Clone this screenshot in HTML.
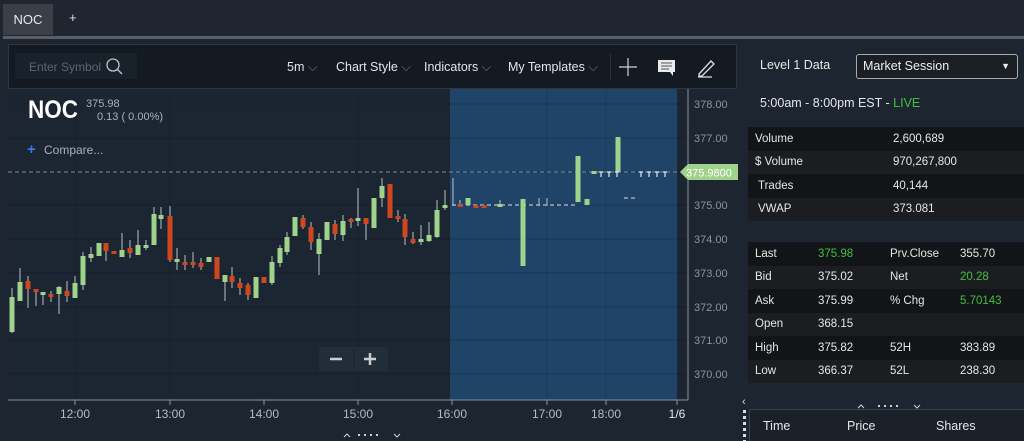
<!DOCTYPE html>
<html><head><meta charset="utf-8"><style>
*{margin:0;padding:0;box-sizing:border-box}
body{width:1024px;height:441px;background:#1d2531;font-family:"Liberation Sans",sans-serif;overflow:hidden;position:relative;color:#d8dde3}
.a{position:absolute}
.tbl{position:absolute;left:748px;width:276px;background:#121417}
.tbl .r{height:23.5px;display:flex;align-items:center;font-size:11.5px;color:#e6e6e6}
.tbl .r:nth-child(even){background:#1b1d21}
.g{color:#3ec13e}
</style></head><body>
<div class="a" style="left:0;top:0;width:1024px;height:37px;background:#1f2630"></div>
<div class="a" style="left:3px;top:4px;width:50px;height:31px;background:#3b4048;color:#e8e8e8;font-size:13px;line-height:31px;text-align:center">NOC</div>
<div class="a" style="left:69px;top:10px;font-size:13px;color:#ddd">+</div>
<div class="a" style="left:3px;top:36px;width:1021px;height:3px;background:#5a5f66"></div>
<div class="a" style="left:8px;top:44px;width:729px;height:45px;background:#141a21;border:1px solid #2e3640"></div>
<div class="a" style="left:15px;top:53px;width:122px;height:26px;background:#19212b"></div>
<div class="a" style="left:29px;top:60px;font-size:12px;color:#5d6672">Enter Symbol</div>
<svg class="a" style="left:105px;top:57px" width="20" height="20"><circle cx="8" cy="8" r="6" fill="none" stroke="#bfc4ca" stroke-width="1.3"/><line x1="12.5" y1="12.5" x2="17" y2="17" stroke="#bfc4ca" stroke-width="1.3"/></svg>
<div class="a" style="left:287px;top:60px;font-size:12.5px;color:#e2e5e8;white-space:nowrap">5m <span style="color:#778">⌵</span></div>
<div class="a" style="left:336px;top:60px;font-size:12.5px;color:#e2e5e8;white-space:nowrap">Chart Style <span style="color:#778">⌵</span></div>
<div class="a" style="left:424px;top:60px;font-size:12.5px;color:#e2e5e8;white-space:nowrap">Indicators <span style="color:#778">⌵</span></div>
<div class="a" style="left:508px;top:60px;font-size:12.5px;color:#e2e5e8;white-space:nowrap">My Templates <span style="color:#778">⌵</span></div>
<div class="a" style="left:610px;top:54px;width:1px;height:26px;background:#2c333c"></div>
<svg class="a" style="left:618px;top:57px" width="20" height="20"><path d="M10 1V19M1 10H19" stroke="#cfd3d8" stroke-width="1.2"/></svg>
<svg class="a" style="left:657px;top:59px" width="20" height="18"><path d="M1 1H18V13H16V17L13 13H1Z" fill="#e8eaec"/><path d="M4 4H15M4 7H15M4 10H12" stroke="#555" stroke-width="1"/></svg>
<svg class="a" style="left:696px;top:57px" width="22" height="22"><path d="M3 17L15 4L18 7L6 19H3Z M2 20H16" fill="none" stroke="#dcdfe2" stroke-width="1.3"/></svg>

<svg class="a" style="left:0;top:89px" width="745" height="352">
<rect x="8" y="0" width="680" height="311" fill="#1c2633"/>
<rect x="450" y="0" width="227" height="311" fill="#1f4468"/>
<g stroke="#000" stroke-opacity="0.18" stroke-width="1">
<line x1="8" y1="15" x2="688" y2="15"/><line x1="8" y1="49" x2="688" y2="49"/><line x1="8" y1="83" x2="688" y2="83"/><line x1="8" y1="116" x2="688" y2="116"/><line x1="8" y1="150" x2="688" y2="150"/><line x1="8" y1="184" x2="688" y2="184"/><line x1="8" y1="218" x2="688" y2="218"/><line x1="8" y1="251" x2="688" y2="251"/><line x1="8" y1="285" x2="688" y2="285"/>
</g>
<g stroke="#000" stroke-opacity="0.1" stroke-width="1">
<line x1="75" y1="0" x2="75" y2="311"/><line x1="170" y1="0" x2="170" y2="311"/><line x1="264" y1="0" x2="264" y2="311"/><line x1="358" y1="0" x2="358" y2="311"/><line x1="547" y1="0" x2="547" y2="311"/><line x1="606" y1="0" x2="606" y2="311"/>
</g>
<line x1="8" y1="83" x2="680" y2="83" stroke="#7f8a95" stroke-dasharray="4,3"/>
<line x1="452" y1="116" x2="575" y2="116" stroke="#dde" stroke-dasharray="4,3"/>
<line x1="624" y1="109" x2="636" y2="109" stroke="#dde" stroke-dasharray="4,3"/>
<line x1="8" y1="311" x2="688" y2="311" stroke="#8a939c"/>
<line x1="688" y1="0" x2="688" y2="311" stroke="#8a939c"/>
<g stroke="#8a939c"><line x1="75" y1="311" x2="75" y2="316"/><line x1="170" y1="311" x2="170" y2="316"/><line x1="264" y1="311" x2="264" y2="316"/><line x1="358" y1="311" x2="358" y2="316"/><line x1="452" y1="311" x2="452" y2="316"/><line x1="547" y1="311" x2="547" y2="316"/><line x1="606" y1="311" x2="606" y2="316"/><line x1="677" y1="311" x2="677" y2="316"/></g>
<g transform="translate(0,-89)" stroke-width="1">
<g stroke="#b8bec4">
<line x1="12" y1="288" x2="12" y2="333"/><line x1="20" y1="268" x2="20" y2="301"/><line x1="28" y1="276" x2="28" y2="308"/><line x1="36" y1="289" x2="36" y2="306"/><line x1="43" y1="292" x2="43" y2="305"/><line x1="51" y1="291" x2="51" y2="302"/><line x1="59" y1="286" x2="59" y2="314"/><line x1="67" y1="281" x2="67" y2="302"/><line x1="75" y1="276" x2="75" y2="298"/><line x1="83" y1="252" x2="83" y2="290"/><line x1="91" y1="247" x2="91" y2="262"/><line x1="106" y1="243" x2="106" y2="261"/><line x1="122" y1="233" x2="122" y2="257"/><line x1="130" y1="240" x2="130" y2="258"/><line x1="138" y1="230" x2="138" y2="255"/><line x1="146" y1="240" x2="146" y2="250"/><line x1="154" y1="207" x2="154" y2="245"/><line x1="161" y1="207" x2="161" y2="229"/><line x1="170" y1="206" x2="170" y2="262"/><line x1="177" y1="248" x2="177" y2="270"/><line x1="185" y1="255" x2="185" y2="270"/><line x1="193" y1="252" x2="193" y2="268"/><line x1="201" y1="258" x2="201" y2="270"/><line x1="225" y1="275" x2="225" y2="301"/><line x1="232" y1="267" x2="232" y2="288"/><line x1="240" y1="278" x2="240" y2="295"/><line x1="248" y1="283" x2="248" y2="300"/><line x1="272" y1="256" x2="272" y2="285"/><line x1="280" y1="245" x2="280" y2="267"/><line x1="287" y1="232" x2="287" y2="255"/><line x1="303" y1="215" x2="303" y2="229"/><line x1="311" y1="222" x2="311" y2="250"/><line x1="319" y1="233" x2="319" y2="275"/><line x1="335" y1="220" x2="335" y2="240"/><line x1="343" y1="215" x2="343" y2="241"/><line x1="351" y1="218" x2="351" y2="228"/><line x1="358" y1="188" x2="358" y2="226"/><line x1="366" y1="218" x2="366" y2="240"/><line x1="382" y1="178" x2="382" y2="207"/><line x1="398" y1="210" x2="398" y2="222"/><line x1="405" y1="214" x2="405" y2="245"/><line x1="413" y1="232" x2="413" y2="244"/><line x1="421" y1="225" x2="421" y2="245"/><line x1="429" y1="222" x2="429" y2="242"/><line x1="437" y1="200" x2="437" y2="238"/><line x1="445" y1="190" x2="445" y2="210"/><line x1="453" y1="178" x2="453" y2="206"/><line x1="460" y1="200" x2="460" y2="207"/><line x1="500" y1="200" x2="500" y2="207"/><line x1="539" y1="198" x2="539" y2="206"/><line x1="547" y1="198" x2="547" y2="206"/>
</g>
<g fill="#9fd38b">
<rect x="9.5" y="297" width="5" height="35"/><rect x="17.5" y="282" width="5" height="19"/><rect x="40.5" y="292" width="5" height="3"/><rect x="56.5" y="287" width="5" height="7"/><rect x="72.5" y="283" width="5" height="15"/><rect x="80.5" y="256" width="5" height="29"/><rect x="88.5" y="254" width="5" height="4"/><rect x="96.5" y="243" width="5" height="13"/><rect x="119.5" y="250" width="5" height="7"/><rect x="135.5" y="245" width="5" height="10"/><rect x="143.5" y="245" width="5" height="3"/><rect x="151.5" y="214" width="5" height="31"/><rect x="158.5" y="215" width="5" height="4"/><rect x="174.5" y="259" width="5" height="3"/><rect x="206.5" y="257" width="5" height="5"/><rect x="222.5" y="275" width="5" height="7"/><rect x="253.5" y="277" width="5" height="21"/><rect x="269.5" y="262" width="5" height="21"/><rect x="277.5" y="248" width="5" height="15"/><rect x="284.5" y="237" width="5" height="15"/><rect x="292.5" y="217" width="5" height="19"/><rect x="316.5" y="239" width="5" height="15"/><rect x="324.5" y="222" width="5" height="18"/><rect x="340.5" y="221" width="5" height="14"/><rect x="355.5" y="218" width="5" height="3"/><rect x="371.5" y="198" width="5" height="30"/><rect x="379.5" y="186" width="5" height="12"/><rect x="418.5" y="239" width="5" height="3"/><rect x="426.5" y="235" width="5" height="6"/><rect x="434.5" y="210" width="5" height="27"/><rect x="442.5" y="205" width="5" height="3"/><rect x="465.5" y="198" width="5" height="7"/><rect x="497.5" y="204" width="5" height="3"/><rect x="520.5" y="199" width="5" height="67"/><rect x="575.5" y="156" width="5" height="46"/><rect x="584.5" y="199" width="5" height="6"/><rect x="615.5" y="137" width="5" height="35"/><rect x="591.5" y="171" width="5" height="3"/>
</g>
<g fill="#d0461f">
<rect x="25.5" y="281" width="5" height="8"/><rect x="33.5" y="289" width="5" height="3"/><rect x="48.5" y="294" width="5" height="3"/><rect x="64.5" y="291" width="5" height="5"/><rect x="103.5" y="243" width="5" height="8"/><rect x="111.5" y="251" width="5" height="3"/><rect x="127.5" y="248" width="5" height="5"/><rect x="167.5" y="216" width="5" height="44"/><rect x="182.5" y="262" width="5" height="3"/><rect x="190.5" y="262" width="5" height="3"/><rect x="198.5" y="263" width="5" height="4"/><rect x="214.5" y="257" width="5" height="22"/><rect x="229.5" y="276" width="5" height="6"/><rect x="237.5" y="283" width="5" height="5"/><rect x="245.5" y="285" width="5" height="10"/><rect x="261.5" y="277" width="5" height="6"/><rect x="300.5" y="218" width="5" height="9"/><rect x="308.5" y="227" width="5" height="15"/><rect x="332.5" y="224" width="5" height="10"/><rect x="348.5" y="219" width="5" height="3"/><rect x="363.5" y="218" width="5" height="6"/><rect x="387.5" y="184" width="5" height="34"/><rect x="395.5" y="216" width="5" height="3"/><rect x="402.5" y="219" width="5" height="18"/><rect x="410.5" y="239" width="5" height="4"/><rect x="457.5" y="204" width="5" height="3"/><rect x="473.5" y="205" width="5" height="3"/><rect x="481.5" y="205" width="5" height="3"/>
</g>
<g stroke="#e6e6e6" stroke-width="1.2"><path d="M599 172h4M601 172v5M607 172h4M609 172v5M615 172h4M617 172v5M639 172h4M641 172v5M647 172h4M649 172v5M655 172h4M657 172v5M663 172h4M665 172v5"/></g>
</g>
<path d="M680 83L688 75H738V91H688Z" fill="#9fd38b"/>
<text x="686" y="87.5" font-size="11" fill="#fff" font-family="Liberation Sans">375.9800</text>
<g font-size="11" fill="#8b949d" font-family="Liberation Sans"><text x="694" y="19">378.00</text><text x="694" y="53">377.00</text><text x="694" y="120">375.00</text><text x="694" y="154">374.00</text><text x="694" y="188">373.00</text><text x="694" y="222">372.00</text><text x="694" y="255">371.00</text><text x="694" y="289">370.00</text></g>
<g font-size="12" fill="#b4bcc4" font-family="Liberation Sans" text-anchor="middle"><text x="75" y="329">12:00</text><text x="170" y="329">13:00</text><text x="264" y="329">14:00</text><text x="358" y="329">15:00</text><text x="452" y="329">16:00</text><text x="547" y="329">17:00</text><text x="606" y="329">18:00</text><text x="677" y="329" fill="#e8e8e8">1/6</text></g>
<rect x="319" y="258" width="69" height="24" fill="#222d3a"/>
<line x1="354" y1="261" x2="354" y2="279" stroke="#1a222c"/>
<path d="M330 270H342M364 270H376M370 264V276" stroke="#c9cdd2" stroke-width="2.5"/>
<g fill="#cfd3d8"><path d="M344 348l3-3 3 3" stroke="#cfd3d8" fill="none"/><rect x="358" y="345" width="2" height="2"/><rect x="364" y="345" width="2" height="2"/><rect x="370" y="345" width="2" height="2"/><rect x="376" y="345" width="2" height="2"/><path d="M394 345l3 3 3-3" stroke="#cfd3d8" fill="none"/></g>
</svg>

<div class="a" style="left:28px;top:96px;font-size:25px;font-weight:bold;color:#fff;transform:scaleX(0.9);transform-origin:left">NOC</div>
<div class="a" style="left:86px;top:98px;font-size:11px;color:#a8b0b8">375.98</div>
<div class="a" style="left:97px;top:111px;font-size:11px;color:#a8b0b8">0.13 ( 0.00%)</div>
<div class="a" style="left:27px;top:141px;font-size:15px;font-weight:bold;color:#2f7fe0">+</div>
<div class="a" style="left:44px;top:143px;font-size:12px;color:#a8b0b8">Compare...</div>

<div class="a" style="left:760px;top:58px;font-size:12.5px;color:#e6e6e6">Level 1 Data</div>
<div class="a" style="left:856px;top:54px;width:162px;height:25px;border:1px solid #aaa;border-radius:3px;background:#1a1f26;font-size:12.5px;line-height:23px;padding-left:6px;color:#eee">Market Session<span style="position:absolute;right:7px;font-size:9px">▼</span></div>
<div class="a" style="left:760px;top:96px;font-size:12.5px;color:#e6e6e6">5:00am - 8:00pm EST - <span class="g">LIVE</span></div>
<div class="tbl" style="top:127px">
<div class="r"><span style="width:145px;padding-left:7px">Volume</span>2,600,689</div>
<div class="r"><span style="width:145px;padding-left:7px">$ Volume</span>970,267,800</div>
<div class="r"><span style="width:145px;padding-left:10px">Trades</span>40,144</div>
<div class="r"><span style="width:145px;padding-left:10px">VWAP</span>373.081</div>
</div>
<div class="tbl" style="top:242px">
<div class="r"><span style="width:70px;padding-left:7px">Last</span><span class="g" style="width:72px">375.98</span><span style="width:70px">Prv.Close</span>355.70</div>
<div class="r"><span style="width:70px;padding-left:7px">Bid</span><span style="width:72px">375.02</span><span style="width:70px">Net</span><span class="g">20.28</span></div>
<div class="r"><span style="width:70px;padding-left:7px">Ask</span><span style="width:72px">375.99</span><span style="width:70px">% Chg</span><span class="g">5.70143</span></div>
<div class="r"><span style="width:70px;padding-left:7px">Open</span><span style="width:72px">368.15</span></div>
<div class="r"><span style="width:70px;padding-left:7px">High</span><span style="width:72px">375.82</span><span style="width:70px">52H</span>383.89</div>
<div class="r"><span style="width:70px;padding-left:7px">Low</span><span style="width:72px">366.37</span><span style="width:70px">52L</span>238.30</div>
</div>
<div class="a" style="left:742px;top:396px;font-size:11px;color:#ddd">‹</div>
<div class="a" style="left:743px;top:410px;width:3px;height:31px;background:repeating-linear-gradient(#ddd 0 3px,transparent 3px 6px)"></div>
<svg class="a" style="left:856px;top:402px" width="66" height="8"><path d="M2 6l3-3 3 3M58 3l3 3 3-3" stroke="#cfd3d8" fill="none"/><g fill="#cfd3d8"><rect x="22" y="3" width="2" height="2"/><rect x="28" y="3" width="2" height="2"/><rect x="34" y="3" width="2" height="2"/><rect x="40" y="3" width="2" height="2"/></g></svg>
<div class="a" style="left:749px;top:409px;width:275px;height:32px;border:1px solid #3a414a;border-right:none;border-bottom:none;background:#1b2129"></div>
<div class="a" style="left:763px;top:419px;font-size:12.5px;color:#e6e6e6">Time</div>
<div class="a" style="left:847px;top:419px;font-size:12.5px;color:#e6e6e6">Price</div>
<div class="a" style="left:936px;top:419px;font-size:12.5px;color:#e6e6e6">Shares</div>
</body></html>
